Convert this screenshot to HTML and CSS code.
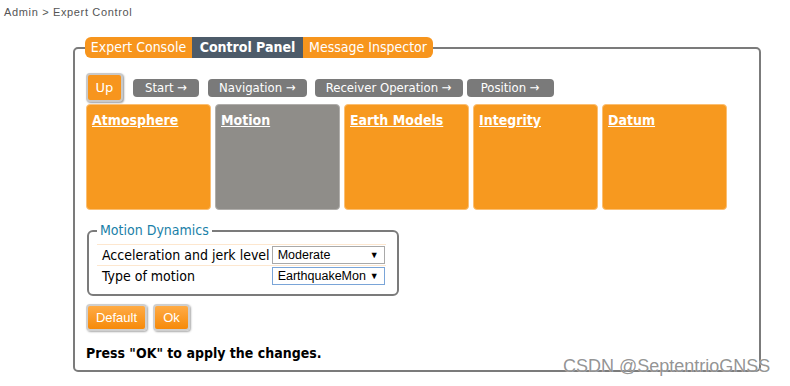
FILE: index.html
```html
<!DOCTYPE html>
<html lang="en">

<head>
  <meta charset="UTF-8">
  <title>Expert Control</title>
  <link rel="stylesheet" href="styles.css">
</head>

<body>
  <div class="crumbs">Admin &gt; Expert Control</div>

  <fieldset class="console">
    <legend class="tabs">
      <span class="tab tab-first">Expert Console</span><span class="tab active">Control Panel</span><span class="tab tab-last">Message Inspector</span>
    </legend>

    <div class="nav">
      <button class="up">Up</button>
      <span class="step step-first">Start &rarr;</span>
      <span class="step">Navigation &rarr;</span>
      <span class="step">Receiver Operation &rarr;</span>
      <span class="step step-last">Position &rarr;</span>
    </div>

    <div class="tiles">
      <a class="tile" href="#">Atmosphere</a>
      <a class="tile current" href="#">Motion</a>
      <a class="tile" href="#">Earth Models</a>
      <a class="tile" href="#">Integrity</a>
      <a class="tile" href="#">Datum</a>
    </div>

    <fieldset class="group">
      <legend>Motion Dynamics</legend>
      <table>
        <tr>
          <td class="label">Acceleration and jerk level</td>
          <td><div class="select"><span>Moderate</span><span class="arrow">&#9660;</span></div></td>
        </tr>
        <tr>
          <td class="label">Type of motion</td>
          <td><div class="select focused"><span>EarthquakeMon</span><span class="arrow">&#9660;</span></div></td>
        </tr>
      </table>
    </fieldset>

    <div class="actions">
      <button class="btn btn-default">Default</button>
      <button class="btn btn-ok">Ok</button>
    </div>

    <p class="hint">Press "OK" to apply the changes.</p>
  </fieldset>

  <div class="watermark">CSDN @SeptentrioGNSS</div>
</body>

</html>
```

FILE: styles.css
```css
body {
  margin: 0;
  font-family: "DejaVu Sans", Tahoma, sans-serif;
  font-stretch: condensed;
  color: #000;
  background: #fff;
  position: relative;
  height: 386px;
  overflow: hidden;
}

.crumbs {
  font-family: "Liberation Sans", Arial, sans-serif;
  font-stretch: normal;
  font-size: 11px;
  line-height: 13px;
  letter-spacing: 0.65px;
  color: #555;
  padding: 6px 4px 0;
}

.console {
  box-sizing: border-box;
  width: 688px;
  margin: 18px 0 0 73px;
  padding: 15px 0 8px 11px;
  border: 2px solid #7b7b7b;
  border-radius: 5px;
}

.tabs {
  padding: 0;
  margin-left: -1px;
  display: flex;
  font-size: 14px;
}

.tab {
  display: inline-block;
  height: 21px;
  line-height: 21px;
  text-align: center;
  color: #fff;
  background-color: #f7951d;
}

.tab-first {
  width: 107px;
  border-radius: 6px 0 0 6px;
}

.active {
  width: 111px;
  font-weight: bold;
  background-color: #4d5b69;
}

.tab-last {
  width: 130px;
  border-radius: 0 6px 6px 0;
}

.nav {
  display: flex;
  align-items: center;
  margin-bottom: 2px;
}

.up {
  box-sizing: border-box;
  width: 37px;
  height: 29px;
  padding: 0;
  margin-right: 10px;
  font-family: inherit;
  font-size: 13px;
  color: #fff;
  background-color: #f7951d;
  border: 2px solid #c9c9c9;
  border-radius: 4px;
  box-shadow: 1px 1px 2px #999;
}

.step {
  height: 18px;
  line-height: 18px;
  padding: 0 11px;
  font-size: 13px;
  color: #fff;
  background-color: #7a7a7a;
  border-radius: 4px;
  margin-right: 8px;
}

.step-first {
  padding: 0 12px;
  margin-right: 9px;
}

.step-last {
  margin-left: -4px;
  padding: 0 14px;
}

.tiles {
  display: flex;
  gap: 4px;
}

.tile {
  box-sizing: border-box;
  width: 125px;
  height: 106px;
  padding: 6px 5px;
  line-height: 18px;
  font-size: 14px;
  font-weight: bold;
  color: #fff;
  background-color: #f7991f;
  border: 1px solid #fbbf73;
  border-radius: 4px;
}

.current {
  background-color: #8f8d89;
  border-color: #b0aeab;
}

.group {
  box-sizing: border-box;
  width: 312px;
  margin: 12px 0 0 1px;
  padding: 5px 8px 8px;
  border: 2px solid #7b7b7b;
  border-radius: 6px;
}

.group legend {
  padding: 0 3px;
  font-size: 14px;
  line-height: 17px;
  color: #1a7fa8;
}

.group table {
  border-collapse: collapse;
  width: 289px;
  font-size: 14px;
}

.group td {
  border-top: 1px solid #fde7cf;
  height: 20px;
  padding: 0;
}

.group .label {
  padding-left: 5px;
}

.select {
  box-sizing: border-box;
  width: 113px;
  height: 18px;
  display: flex;
  align-items: center;
  justify-content: space-between;
  padding: 0 5px 0 5px;
  font-family: "Liberation Sans", Arial, sans-serif;
  font-stretch: normal;
  font-size: 12.5px;
  background: #fff;
  border: 1px solid #a9a9a9;
}

.focused {
  border-color: #7aa5d8;
}

.arrow {
  font-size: 9px;
}

.actions {
  display: flex;
  gap: 6px;
  margin-top: 8px;
}

.btn {
  box-sizing: border-box;
  height: 27px;
  padding: 0;
  font-family: "Liberation Sans", Arial, sans-serif;
  font-size: 13px;
  color: #fff;
  background: linear-gradient(#ffab45, #f68a0a);
  border: 2px solid #cfcfcf;
  border-radius: 4px;
  box-shadow: 1px 1px 2px #aaa;
}

.btn-default {
  width: 61px;
}

.btn-ok {
  width: 37px;
}

.hint {
  margin: 13px 0 0;
  font-size: 14px;
  font-weight: bold;
  line-height: 18px;
}

.watermark {
  position: absolute;
  left: 563px;
  top: 356px;
  font-family: "Liberation Sans", Arial, sans-serif;
  font-size: 18px;
  color: rgba(120, 120, 120, 0.8);
  text-shadow: 0 0 1px #fff;
}
```
